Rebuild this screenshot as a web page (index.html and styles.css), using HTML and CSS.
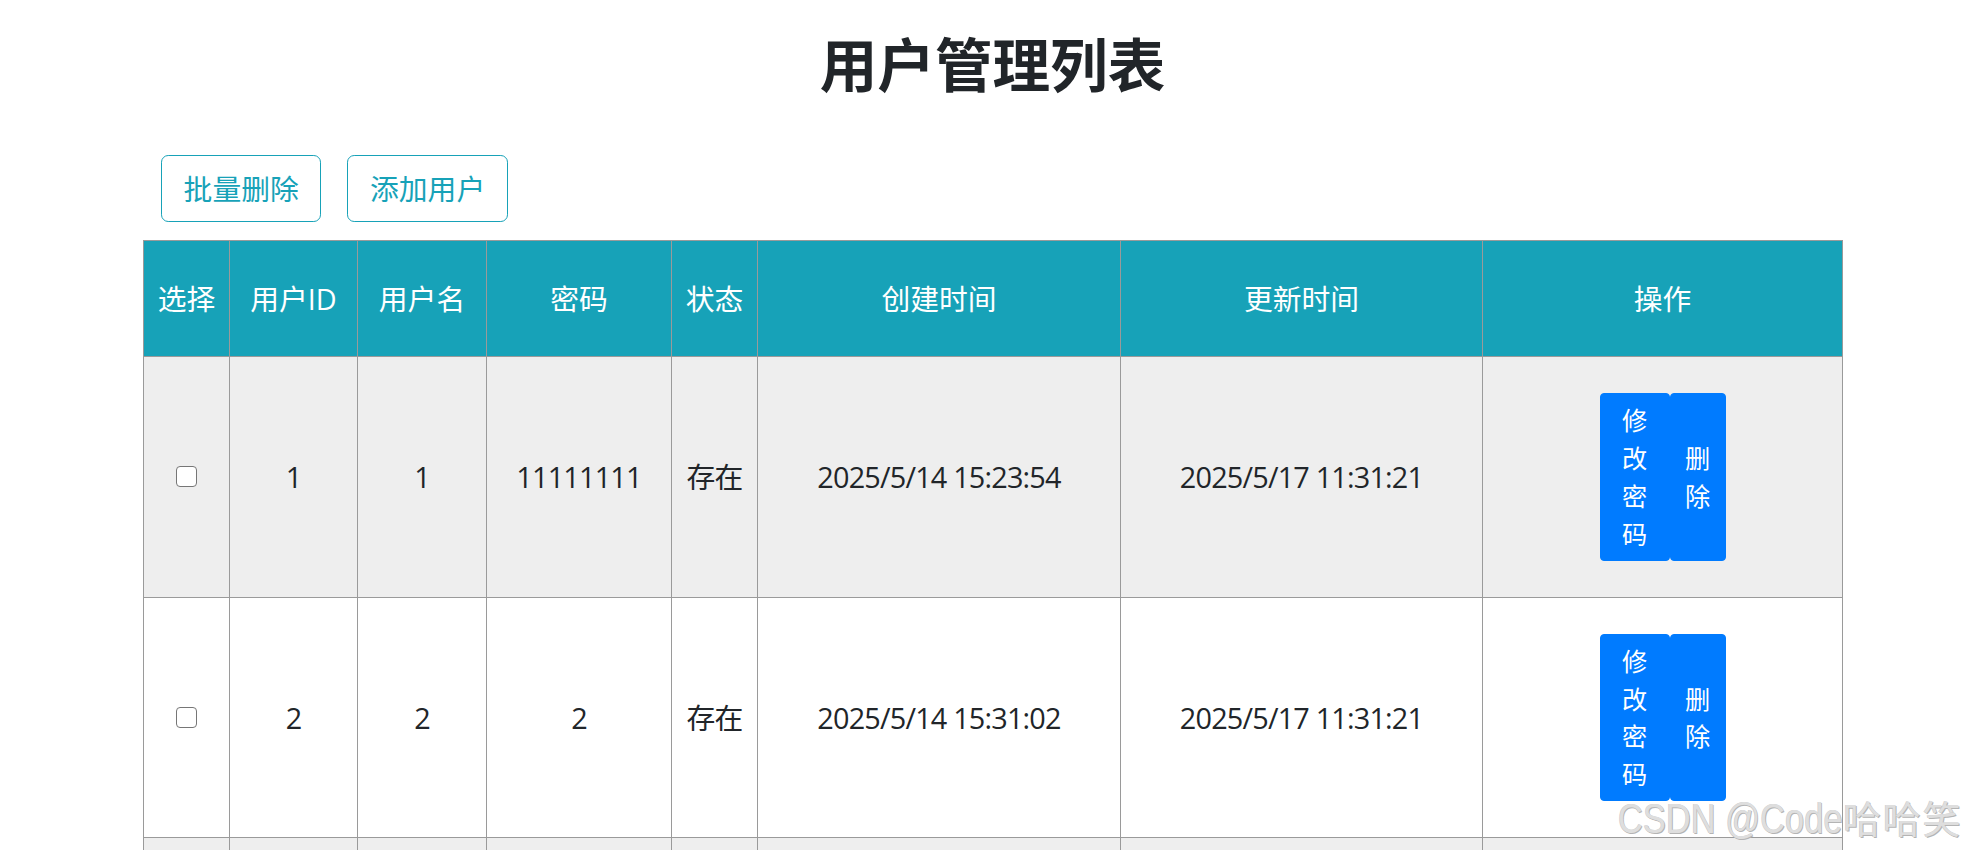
FILE: index.html
```html
<!DOCTYPE html>
<html lang="zh-CN">
<head>
<meta charset="utf-8">
<title>用户管理列表</title>
<link rel="stylesheet" href="styles.css">
</head>
<body>
<div class="page">
  <div class="container">
    <h2 class="title">用户管理列表</h2>
    <div class="toolbar">
      <button class="btn-outline">批量删除</button>
      <button class="btn-outline">添加用户</button>
    </div>
    <table class="users">
      <colgroup>
        <col class="c1"><col class="c2"><col class="c3"><col class="c4">
        <col class="c5"><col class="c6"><col class="c7"><col class="c8">
      </colgroup>
      <thead>
        <tr>
          <th>选择</th><th>用户ID</th><th>用户名</th><th>密码</th>
          <th>状态</th><th>创建时间</th><th>更新时间</th><th>操作</th>
        </tr>
      </thead>
      <tbody>
        <tr class="odd">
          <td><input type="checkbox" class="chk"></td>
          <td>1</td><td>1</td><td>11111111</td><td>存在</td>
          <td>2025/5/14 15:23:54</td><td>2025/5/17 11:31:21</td>
          <td><div class="ops"><button class="btn-sm btn-edit">修改密码</button><button class="btn-sm btn-del">删除</button></div></td>
        </tr>
        <tr>
          <td><input type="checkbox" class="chk"></td>
          <td>2</td><td>2</td><td>2</td><td>存在</td>
          <td>2025/5/14 15:31:02</td><td>2025/5/17 11:31:21</td>
          <td><div class="ops"><button class="btn-sm btn-edit">修改密码</button><button class="btn-sm btn-del">删除</button></div></td>
        </tr>
        <tr class="odd filler">
          <td></td><td></td><td></td><td></td>
          <td></td><td></td><td></td><td></td>
        </tr>
      </tbody>
    </table>
  </div>
  <div class="watermark"><span class="wm-latin">CSDN @Code</span><span class="wm-cjk">哈哈笑</span></div>
</div>
</body>
</html>
```

FILE: styles.css
```css
html, body {
  margin: 0;
  padding: 0;
  overflow: hidden;
  background: #ffffff;
}

body {
  font-family: "Open Sans", "Noto Sans CJK SC", sans-serif;
  font-size: 28.8px;
  line-height: 1.5;
  color: #212529;
}

.page {
  position: relative;
  height: 850px;
  padding-top: 28px;
  box-sizing: border-box;
  overflow: hidden;
}

.container {
  width: 1699px;
  margin-left: 143px;
}

.title {
  margin: 0 0 58px 0;
  font-family: "Noto Sans CJK SC", sans-serif;
  font-size: 57.6px;
  line-height: 1.2;
  font-weight: 700;
  text-align: center;
  color: #212529;
}

.toolbar {
  display: flex;
  gap: 26px;
  padding-left: 18px;
  margin-bottom: 18px;
}

.btn-outline {
  font-family: "Open Sans", "Noto Sans CJK SC", sans-serif;
  font-size: 28.8px;
  line-height: 43.2px;
  padding: 10.8px 21.6px;
  border: 1px solid #17a2b8;
  border-radius: 7.2px;
  color: #17a2b8;
  background: transparent;
  cursor: pointer;
}

.users {
  width: 1699px;
  table-layout: fixed;
  border-collapse: collapse;
}

.c1 { width: 86px; }
.c2 { width: 128px; }
.c3 { width: 129px; }
.c4 { width: 185px; }
.c5 { width: 86px; }
.c6 { width: 363px; }
.c7 { width: 362px; }
.c8 { width: 360px; }

.users th,
.users td {
  border: 1px solid #9a9a9a;
  padding: 36px 0;
  text-align: center;
  vertical-align: middle;
  line-height: 43.2px;
}

.users th {
  background: #17a2b8;
  color: #ffffff;
  font-weight: 400;
}

.users td {
  letter-spacing: -0.8px;
  white-space: nowrap;
}

.users tr.odd td {
  background: #eeeeee;
}

.users tr.filler td {
  height: 168px;
}

.chk {
  -webkit-appearance: none;
  appearance: none;
  display: block;
  width: 21px;
  height: 21px;
  margin: 0 auto;
  border: 1.8px solid #767676;
  border-radius: 4px;
  background: #ffffff;
  box-sizing: border-box;
}

.ops {
  display: flex;
  justify-content: center;
  white-space: normal;
}

.btn-sm {
  display: flex;
  align-items: center;
  justify-content: center;
  box-sizing: border-box;
  font-family: "Noto Sans CJK SC", sans-serif;
  font-size: 25.2px;
  line-height: 37.8px;
  letter-spacing: 0;
  text-align: center;
  padding: 7.2px 14.4px;
  border: 1px solid #007bff;
  border-radius: 4px;
  background: #007bff;
  color: #ffffff;
  white-space: normal;
  cursor: pointer;
}

.btn-edit { width: 70px; }
.btn-del { width: 56px; padding-left: 13px; padding-right: 13px; }

.watermark {
  position: absolute;
  left: 1618px;
  top: 796px;
  display: flex;
  align-items: baseline;
  white-space: nowrap;
  line-height: 42px;
  color: #dedede;
  text-shadow: 1px 1px 0 #b4b4b4, -0.5px -0.5px 0 #cacaca;
  pointer-events: none;
}

.wm-latin {
  display: inline-block;
  width: 225px;
  font-family: "Liberation Sans", Arial, sans-serif;
  font-size: 42px;
  transform: scaleX(0.82);
  transform-origin: left center;
}

.wm-cjk {
  font-family: "Noto Sans CJK SC", sans-serif;
  font-size: 38px;
  letter-spacing: 1.7px;
}
```
